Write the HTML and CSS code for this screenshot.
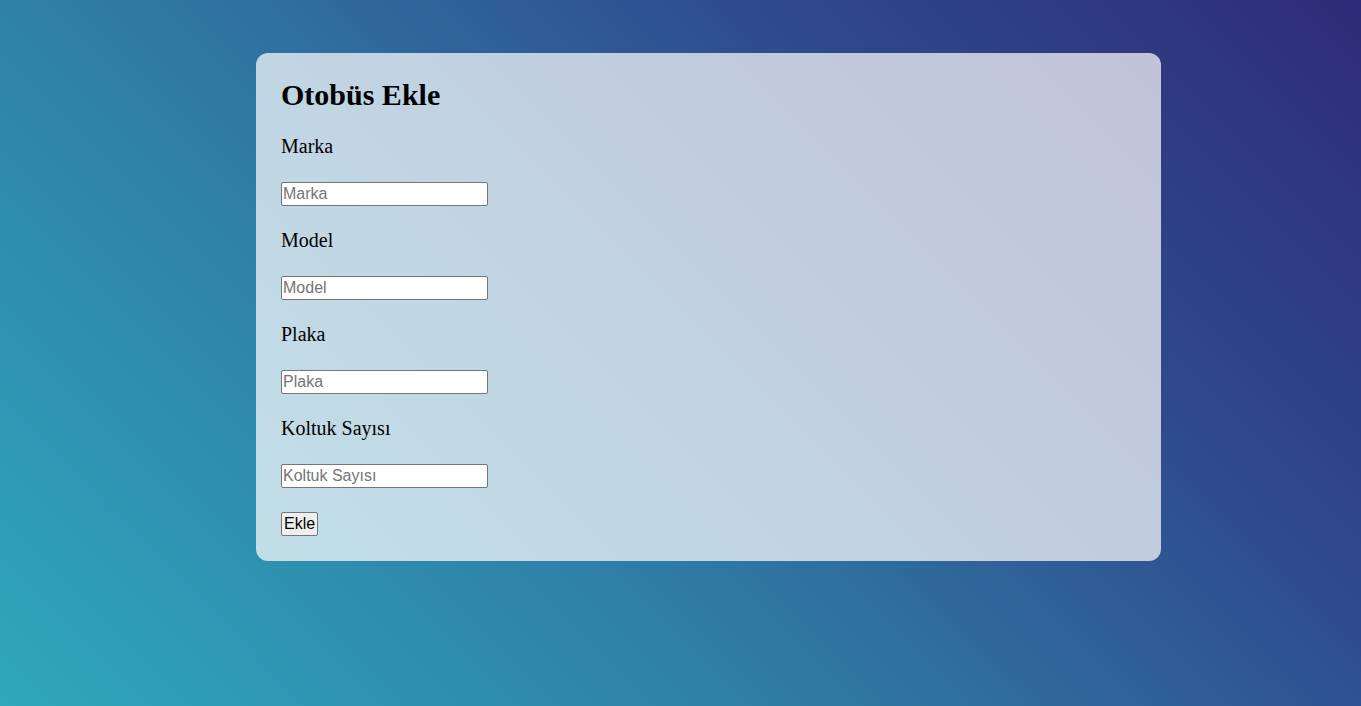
FILE: index.html
```html
<!DOCTYPE html>
<html lang="tr">
<head>
<meta charset="utf-8">
<title>Otobüs Ekle</title>
<link rel="stylesheet" href="styles.css">
</head>
<body>
<div class="card">
  <h1 class="title">Otobüs Ekle</h1>
  <form class="form">
    <label class="label" for="marka">Marka</label>
    <input class="field" id="marka" type="text" placeholder="Marka">
    <label class="label" for="model">Model</label>
    <input class="field" id="model" type="text" placeholder="Model">
    <label class="label" for="plaka">Plaka</label>
    <input class="field" id="plaka" type="text" placeholder="Plaka">
    <label class="label" for="koltuk">Koltuk Sayısı</label>
    <input class="field" id="koltuk" type="text" placeholder="Koltuk Sayısı">
    <button class="btn" type="button">Ekle</button>
  </form>
</div>
</body>
</html>
```
FILE: styles.css
```css
html, body {
  margin: 0;
  height: 100%;
}
body {
  background: linear-gradient(45deg, #2fa8bb 0%, #2f7aa5 40%, #2f4b8c 70%, #2e2c76 100%);
  font-family: "Liberation Serif", "Times New Roman", serif;
  padding-top: 53px;
  box-sizing: border-box;
  overflow: hidden;
}
.card {
  width: 905px;
  box-sizing: border-box;
  margin-left: 256px;
  padding: 25px;
  background: rgba(255, 255, 255, 0.7);
  border-radius: 12px;
}
.title {
  margin: 0 0 23px 0;
  font-size: 30px;
  line-height: 34px;
  font-weight: bold;
  color: #000;
}
.form {
  display: flex;
  flex-direction: column;
  align-items: flex-start;
}
.label {
  font-size: 20px;
  line-height: 23px;
  color: #000;
  margin-bottom: 24px;
}
.field {
  width: 207px;
  height: 24px;
  box-sizing: border-box;
  padding: 1px 2px 1px 1px;
  border: 1px solid #767676;
  border-radius: 2px;
  background: #fff;
  font-family: "Liberation Sans", Arial, sans-serif;
  font-size: 16px;
  color: #000;
  margin: 0 0 23px 0;
}
.field::placeholder {
  color: #757575;
}
.btn {
  height: 24px;
  box-sizing: border-box;
  padding: 1px 2px;
  margin: 1px 0 0 0;
  border: 1px solid #767676;
  border-radius: 2px;
  background: #efefef;
  font-family: "Liberation Sans", Arial, sans-serif;
  font-size: 16px;
  color: #000;
}
```
